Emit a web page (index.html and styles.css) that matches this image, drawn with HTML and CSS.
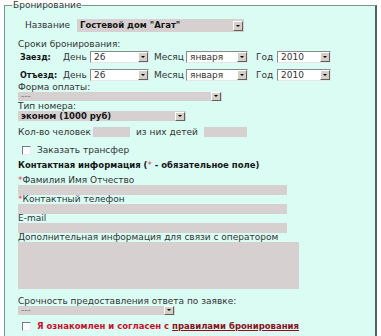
FILE: index.html
```html
<!DOCTYPE html>
<html lang="ru">
<head>
<meta charset="utf-8">
<link rel="stylesheet" href="styles.css">
</head>
<body>
<fieldset class="booking">
  <legend class="legend">Бронирование</legend>

  <div class="row row-name">
    <span class="lbl-name">Название</span>
    <div class="sel sel-gray sel-name bold">Гостевой дом "Агат"<span class="arrow"></span></div>
  </div>

  <div class="text t-dates">Сроки бронирования:</div>

  <div class="row row-date">
    <span class="lbl-date bold">Заезд:</span>
    <span class="lbl-day">День</span>
    <div class="sel sel-white sel-day">26<span class="arrow"></span></div>
    <span class="lbl-month">Месяц</span>
    <div class="sel sel-white sel-month">января<span class="arrow"></span></div>
    <span class="lbl-year">Год</span>
    <div class="sel sel-white sel-year">2010<span class="arrow"></span></div>
  </div>

  <div class="row row-date row-date2">
    <span class="lbl-date bold">Отъезд:</span>
    <span class="lbl-day">День</span>
    <div class="sel sel-white sel-day">26<span class="arrow"></span></div>
    <span class="lbl-month">Месяц</span>
    <div class="sel sel-white sel-month">января<span class="arrow"></span></div>
    <span class="lbl-year">Год</span>
    <div class="sel sel-white sel-year">2010<span class="arrow"></span></div>
  </div>

  <div class="text t-pay">Форма оплаты:</div>
  <div class="sel sel-gray sel-thin sel-pay">---<span class="arrow"></span></div>

  <div class="text t-type">Тип номера:</div>
  <div class="sel sel-gray sel-thin sel-type bold">эконом (1000 руб)<span class="arrow"></span></div>

  <div class="row row-people">
    <span class="lbl-people">Кол-во человек</span>
    <div class="field f-people"></div>
    <span>из них детей</span>
    <div class="field f-kids"></div>
  </div>

  <div class="row row-check">
    <span class="check"></span>
    <span>Заказать трансфер</span>
  </div>

  <div class="text t-contact bold">Контактная информация (<span class="req">*</span> - обязательное поле)</div>

  <div class="text t-fio"><span class="req">*</span>Фамилия Имя Отчество</div>
  <div class="field f-wide"></div>
  <div class="text t-phone"><span class="req">*</span>Контактный телефон</div>
  <div class="field f-wide"></div>
  <div class="text t-mail">E-mail</div>
  <div class="field f-wide"></div>
  <div class="text t-extra">Дополнительная информация для связи с оператором</div>
  <div class="field f-area"></div>

  <div class="text t-urg">Срочность предоставления ответа по заявке:</div>
  <div class="sel sel-gray sel-thin sel-urg">---<span class="arrow"></span></div>

  <div class="row row-agree">
    <span class="check"></span>
    <span class="agree bold">Я ознакомлен и согласен с <a class="rules" href="#">правилами бронирования</a></span>
  </div>
</fieldset>
</body>
</html>
```

FILE: styles.css
```css
html, body {
  margin: 0;
  padding: 0;
  background: #ffffff;
}

body {
  font-family: "DejaVu Sans", Verdana, sans-serif;
  font-size: 9px;
  line-height: 9px;
  color: #333333;
}

.bold { font-weight: bold; font-size: 8.5px; color: #151515; }

.booking {
  margin: 1px 0 0 4px;
  width: 373px;
  min-height: 370px;
  box-sizing: border-box;
  border: 1px solid #7e918c;
  border-right: 2px solid #55625f;
  background: #dafcf3;
  padding: 0 0 0 13px;
}

.legend {
  padding: 0 1px;
  margin-left: -6px;
  color: #333333;
}

.row {
  display: flex;
  align-items: center;
}

/* selects */
.sel {
  position: relative;
  box-sizing: border-box;
  padding-left: 3px;
  white-space: nowrap;
  overflow: hidden;
  display: flex;
  align-items: center;
}

.sel-gray {
  background: #d6d0d1;
  height: 13px;
}

.sel-thin { height: 9px; }

.sel-white {
  background: #ffffff;
  height: 12px;
  border-top: 1px solid #8a8a8a;
  border-left: 1px solid #8a8a8a;
  border-bottom: 1px solid #e6e6e6;
  border-right: 1px solid #e6e6e6;
}

.arrow {
  position: absolute;
  right: 1px;
  top: 50%;
  width: 10px;
  height: 10px;
  margin-top: -5px;
  box-sizing: border-box;
  background: #d4d0c8;
  border-top: 1px solid #ffffff;
  border-left: 1px solid #ffffff;
  border-right: 1px solid #606060;
  border-bottom: 1px solid #606060;
}

.arrow::after {
  content: "";
  position: absolute;
  left: 2px;
  top: 3px;
  border-left: 2px solid transparent;
  border-right: 2px solid transparent;
  border-top: 2px solid #000;
}

.sel-white .arrow { right: 0; }
.sel-thin .arrow { height: 9px; margin-top: -4.5px; }
.sel-thin .arrow::after { top: 2px; }

/* name row */
.row-name {
  margin-top: 9px;
  padding-left: 7px;
}
.lbl-name { width: 52px; }
.sel-name { width: 167px; }

.t-dates { margin-top: 8px; }

.row-date { margin-top: 2px; }
.row-date2 { margin-top: 6px; }
.lbl-date { width: 45px; padding-left: 2px; box-sizing: border-box; font-size: 8px; }
.lbl-day { width: 27px; }
.sel-day { width: 59px; }
.lbl-month { margin-left: 5px; width: 32px; }
.sel-month { width: 62px; }
.lbl-year { margin-left: 8px; width: 21px; }
.sel-year { width: 54px; }

.t-pay { margin-top: 2px; }
.sel-pay { width: 204px; color: #777; }
.t-type { margin-top: 1px; }
.sel-type { width: 168px; height: 10px; }

.row-people { margin-top: 6px; }
.lbl-people { width: 75px; }
.field {
  background: #d6d0d1;
  height: 10px;
}
.f-people { width: 37px; margin-right: 6px; }
.f-kids { width: 43px; margin-left: 6px; }

.row-check { margin-top: 9px; padding-left: 4px; }
.check {
  width: 9px;
  height: 9px;
  box-sizing: border-box;
  background: #ffffff;
  border-top: 1px solid #7a7a7a;
  border-left: 1px solid #7a7a7a;
  border-bottom: 1px solid #ececec;
  border-right: 1px solid #ececec;
  margin-right: 6px;
}

.t-contact { margin-top: 6px; }
.req { color: #e0405a; font-weight: normal; }

.t-fio { margin-top: 6px; }
.f-wide { width: 269px; }
.f-area { width: 281px; height: 47px; }

.t-urg { margin-top: 8px; }
.sel-urg { width: 157px; color: #777; }

.row-agree { margin-top: 7px; padding-left: 4px; }
.agree { color: #c8102a; }
.rules { color: #8a1020; text-decoration: underline; }
```
